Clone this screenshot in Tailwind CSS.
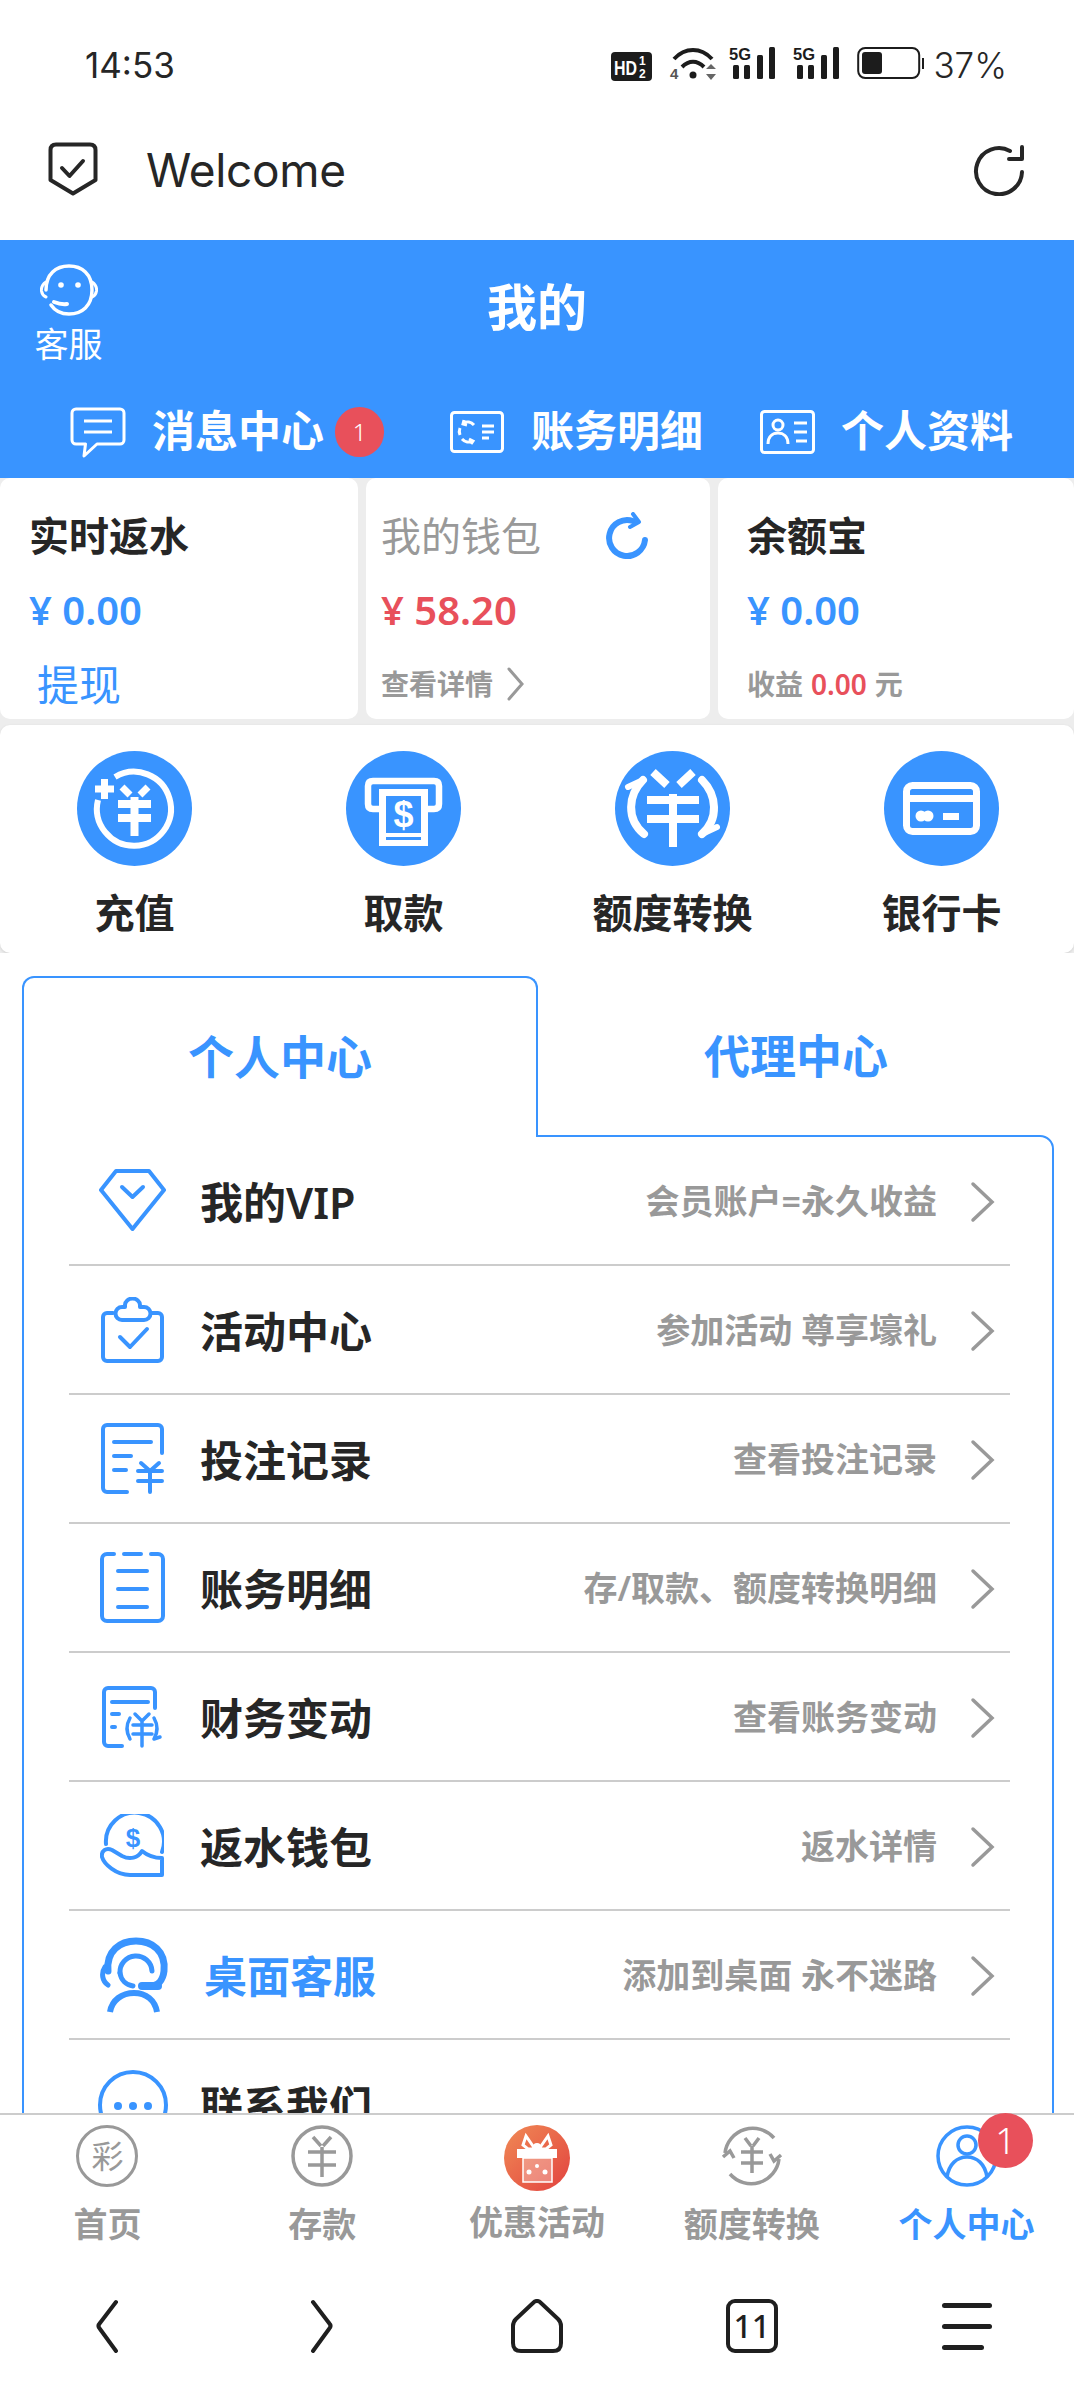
<!DOCTYPE html>
<html lang="zh-CN">
<head>
  <meta charset="UTF-8" />
  <meta name="viewport" content="width=device-width, initial-scale=1.0"/>
  <title>我的</title>
  <script src="https://cdn.jsdelivr.net/npm/@tailwindcss/browser@4"></script>
</head>
<body class="bg-white font-['Noto_Sans','Noto_Sans_CJK_SC',sans-serif]">
<div class="w-[1074px] h-[2400px] flex flex-col overflow-hidden text-[#262626]">

  <!-- Status bar -->
  <div class="h-[100px] shrink-0 pt-[46px] pl-[85px] pr-[67px] flex items-start justify-between">
    <span class="text-[35px] leading-[38px] font-['Inter']">14:53</span>
    <div class="flex items-start h-[36px]">
      <svg width="42" height="30" viewBox="0 0 42 30" class="mt-[6px]"><rect width="41" height="29" rx="4" fill="#1c1c1c"/><text x="3" y="23" font-size="20" font-weight="700" fill="#fff" font-family="Liberation Sans" textLength="23" lengthAdjust="spacingAndGlyphs">HD</text><text x="28" y="13" font-size="12" font-weight="700" fill="#fff" font-family="Liberation Sans">1</text><text x="28" y="26" font-size="12" font-weight="700" fill="#fff" font-family="Liberation Sans">2</text></svg>
      <svg width="48" height="36" viewBox="0 0 48 36" class="ml-[16px]" fill="none"><path d="M5 13C16 1 32 1 43 13" stroke="#1c1c1c" stroke-width="4"/><path d="M13 21C20 14 28 14 35 21" stroke="#1c1c1c" stroke-width="4"/><circle cx="24" cy="29" r="3.5" fill="#1c1c1c"/><text x="1" y="33" font-size="15" font-weight="700" fill="#555" font-family="Liberation Sans">4</text><path d="M38 22l5-5 5 5zM38 27l5 6 5-6z" fill="#666" transform="translate(-1 1)"/></svg>
      <svg width="46" height="34" viewBox="0 0 46 34" class="ml-[12px]" fill="#1c1c1c"><text x="0" y="14" font-size="16" font-weight="700" font-family="Liberation Sans" textLength="22" lengthAdjust="spacingAndGlyphs">5G</text><rect x="4" y="19" width="6" height="14" rx="1.5"/><rect x="15" y="19" width="6" height="14" rx="1.5"/><rect x="28" y="9" width="6" height="24" rx="1.5"/><rect x="40" y="1" width="6" height="32" rx="1.5"/></svg>
      <svg width="46" height="34" viewBox="0 0 46 34" class="ml-[18px]" fill="#1c1c1c"><text x="0" y="14" font-size="16" font-weight="700" font-family="Liberation Sans" textLength="22" lengthAdjust="spacingAndGlyphs">5G</text><rect x="4" y="19" width="6" height="14" rx="1.5"/><rect x="15" y="19" width="6" height="14" rx="1.5"/><rect x="28" y="9" width="6" height="24" rx="1.5"/><rect x="40" y="1" width="6" height="32" rx="1.5"/></svg>
      <svg width="68" height="34" viewBox="0 0 68 34" class="ml-[18px]" fill="none"><rect x="1.2" y="2" width="61" height="30" rx="7" stroke="#1c1c1c" stroke-width="2"/><rect x="5" y="6" width="20" height="22" rx="3" fill="#1c1c1c"/><rect x="65" y="12" width="2" height="11" fill="#1c1c1c"/></svg>
      <span class="ml-[8px] text-[35px] leading-[38px] font-['Inter'] font-light">37%</span>
    </div>
  </div>

  <!-- Browser bar -->
  <div class="h-[140px] shrink-0 pl-[48px] pr-[48px] flex items-center">
    <svg width="50" height="54" viewBox="0 0 50 54" fill="none" stroke="#262626" stroke-width="4" stroke-linejoin="round" class="-mt-[2px]"><path d="M8 2.500H42Q47.500 2.500 47.500 8V38L25 51.500 2.500 38V8Q2.500 2.500 8 2.500Z"/><path d="M14 26l7.500 8L35 19" stroke-linecap="round"/></svg>
    <span class="ml-[48px] text-[46px] leading-none font-['Inter'] tracking-[-0.3px]">Welcome</span>
    <svg width="54" height="52" viewBox="0 0 54 52" fill="none" stroke="#262626" stroke-width="4" stroke-linecap="round" stroke-linejoin="round" class="ml-auto"><path d="M50 28A23 23 0 1 1 38 7"/><path d="M50 3L50 15 37 15"/></svg>
  </div>

  <!-- Scrolling page, cut off by the tab bar -->
  <div class="h-[1873px] shrink-0 overflow-hidden bg-white">
    <!-- Blue header -->
    <div class="h-[238px] bg-[#3994ff] text-white">
      <div class="grid grid-cols-[137px_1fr_137px] h-[166px]">
        <div class="flex flex-col items-center pt-[24px]">
          <svg width="58" height="52" viewBox="0 0 58 52" fill="none" stroke="#fff" stroke-width="3.500" stroke-linecap="round"><path d="M6 26C6 10 16 2 29 2s23 8 23 24-10 24-23 24c-8 0-14-3-18-9"/><path d="M6 18C3 20 1 23 1.500 27c.5 3 2 5 4.500 6" stroke-width="3"/><path d="M52 18c3 2 5 5 4.500 9-.5 3-2 5-4.500 6" stroke-width="3"/><circle cx="21" cy="21" r="2.800" fill="#fff" stroke="none"/><circle cx="38" cy="21" r="2.800" fill="#fff" stroke="none"/><path d="M14 38c5 2 9 2.500 13 2" stroke-width="4"/></svg>
          <span class="mt-[6px] text-[34px] leading-[44px]">客服</span>
        </div>
        <div class="flex justify-center items-start pt-[36px]"><span class="text-[50px] leading-[62px] font-bold">我的</span></div>
      </div>
      <div class="flex items-center h-[52px] pl-[70px]">
        <div class="w-[380px] flex items-center">
          <svg width="56" height="51" viewBox="0 0 56 51" fill="none" stroke="#fff" stroke-width="3" stroke-linejoin="round"><path d="M6 2H50a4 4 0 0 1 4 4V33a4 4 0 0 1-4 4H27L14 49 15.500 37H6a4 4 0 0 1-4-4V6A4 4 0 0 1 6 2Z"/><path d="M14 14H42M14 25H42"/></svg>
          <span class="ml-[26px] -mt-[3px] text-[43px] leading-[50px] font-bold">消息中心</span>
          <span class="ml-[11px] w-[49px] h-[50px] rounded-full bg-[#e8505b] flex items-center justify-center text-[24px] font-light">1</span>
        </div>
        <div class="w-[310px] flex items-center">
          <svg width="54" height="42" viewBox="0 0 54 42" fill="none" stroke="#fff" stroke-width="3"><rect x="1.500" y="1.500" width="51" height="39" rx="3"/><path d="M13 12a9 9 0 0 1 11 2M23 30a9 9 0 0 1-11-2M10 24a9 9 0 0 1 0-7M14 9l-1 4 4 1M21 33l2-3-4-2"/><path d="M32 15H44M32 21H44M32 27H39"/></svg>
          <span class="ml-[27px] -mt-[3px] text-[43px] leading-[50px] font-bold">账务明细</span>
        </div>
        <div class="flex items-center">
          <svg width="55" height="44" viewBox="0 0 55 44" fill="none" stroke="#fff" stroke-width="3"><rect x="1.500" y="1.500" width="52" height="41" rx="3"/><circle cx="18" cy="15" r="5"/><path d="M8 34c0-8 5-11 10-11s10 3 10 11"/><path d="M34 13H47M34 22H47M36 31H47"/></svg>
          <span class="ml-[26px] -mt-[3px] text-[43px] leading-[50px] font-bold">个人资料</span>
        </div>
      </div>
    </div>

    <!-- Wallet cards and quick actions -->
    <div class="bg-[#ededed]">
      <div class="flex gap-[8px] h-[241px]">
        <div class="w-[358px] bg-white rounded-[10px] pl-[29px] pt-[38px] flex flex-col gap-[34px]">
          <div class="h-[40px] flex items-center text-[40px] font-semibold">实时返水</div>
          <div class="h-[40px] flex items-center text-[40px] font-semibold text-[#3994ff]">¥ 0.00</div>
          <div class="h-[40px] flex items-center text-[42px] text-[#3994ff] pl-[8px]">提现</div>
        </div>
        <div class="w-[344px] bg-white rounded-[10px] pl-[15px] pt-[38px] flex flex-col gap-[34px]">
          <div class="h-[40px] flex items-center text-[40px] text-[#999]">我的钱包
            <svg width="44" height="48" viewBox="0 0 44 48" fill="none" stroke="#3994ff" stroke-width="6" stroke-linecap="round" stroke-linejoin="round" class="ml-[65px]"><path d="M39 28A18 18 0 1 1 27 9"/><path d="M27 2L33 10 24 15" stroke-width="4"/></svg>
          </div>
          <div class="h-[40px] flex items-center text-[40px] font-semibold text-[#e8505b]">¥ 58.20</div>
          <div class="h-[40px] flex items-center text-[28px] font-semibold text-[#999]">查看详情
            <svg width="18" height="34" viewBox="0 0 18 34" fill="none" stroke="#999" stroke-width="3" stroke-linecap="round" class="ml-[14px]"><path d="M2 2L15 17 2 32"/></svg>
          </div>
        </div>
        <div class="flex-1 bg-white rounded-[10px] pl-[29px] pt-[38px] flex flex-col gap-[34px]">
          <div class="h-[40px] flex items-center text-[40px] font-semibold">余额宝</div>
          <div class="h-[40px] flex items-center text-[40px] font-semibold text-[#3994ff]">¥ 0.00</div>
          <div class="h-[40px] flex items-center text-[28px] font-semibold text-[#999]">收益<span class="ml-[8px] text-[#e8505b]">0.00</span><span class="ml-[8px]">元</span></div>
        </div>
      </div>
      <div class="mt-[6px] h-[228px] bg-white rounded-[10px] pt-[26px] pb-[16px] grid grid-cols-[269px_269px_269px_269px] shadow-[0_1px_3px_rgba(0,0,0,0.12)]">
        <div class="flex flex-col items-center">
          <svg width="115" height="115" viewBox="0 0 115 115"><circle cx="57.500" cy="57.500" r="57.500" fill="#3994ff"/><g fill="none" stroke="#fff"><path d="M38 26A37 37 0 1 1 21 49" stroke-width="6"/><path d="M18 38H37M27.500 28V48" stroke-width="7"/><path d="M45 36l8 8M71 36l-8 8" stroke-width="7"/><path d="M41 53H74M41 67H74M57.500 46V85" stroke-width="8"/></g></svg>
          <span class="mt-[23px] text-[40px] leading-[48px] font-semibold">充值</span>
        </div>
        <div class="flex flex-col items-center">
          <svg width="115" height="115" viewBox="0 0 115 115"><circle cx="57.500" cy="57.500" r="57.500" fill="#3994ff"/><path d="M33 58H27Q22 58 22 53V35Q22 30 27 30H88Q93 30 93 35V53Q93 58 88 58H82" fill="none" stroke="#fff" stroke-width="6.500"/><rect x="33" y="38" width="49" height="57" fill="#fff"/><rect x="40" y="45" width="35" height="37" fill="#3994ff"/><rect x="40" y="86" width="35" height="3" fill="#3994ff"/><text x="57.500" y="76" text-anchor="middle" font-size="36" font-weight="700" fill="#fff" font-family="Liberation Sans">$</text></svg>
          <span class="mt-[23px] text-[40px] leading-[48px] font-semibold">取款</span>
        </div>
        <div class="flex flex-col items-center">
          <svg width="115" height="115" viewBox="0 0 115 115"><circle cx="57.500" cy="57.500" r="57.500" fill="#3994ff"/><g fill="none" stroke="#fff" stroke-width="8"><path d="M38 21l14 13M78 21L64 34"/><path d="M32 49H84M32 68H84M58 43V96"/><path d="M28 29C13 44 11 68 29 83" stroke-linecap="round"/><path d="M87 29C102 44 104 68 87 83" stroke-linecap="round"/><path d="M13 36l15-7M102 76l-15 7" stroke-linecap="round" stroke-width="6"/></g></svg>
          <span class="mt-[23px] text-[40px] leading-[48px] font-semibold">额度转换</span>
        </div>
        <div class="flex flex-col items-center">
          <svg width="115" height="115" viewBox="0 0 115 115"><circle cx="57.500" cy="57.500" r="57.500" fill="#3994ff"/><rect x="22.500" y="34.500" width="70" height="46" rx="6" fill="none" stroke="#fff" stroke-width="7"/><rect x="22" y="44" width="71" height="7" fill="#fff"/><circle cx="37" cy="65" r="5.500" fill="#fff"/><circle cx="44" cy="65" r="5.500" fill="#fff"/><rect x="59" y="62" width="16" height="7" fill="#fff"/></svg>
          <span class="mt-[23px] text-[40px] leading-[48px] font-semibold">银行卡</span>
        </div>
      </div>
    </div>

    <!-- Tabs -->
    <div class="bg-white pl-[22px] pr-[20px] pt-[23px]">
      <div class="flex text-[46px] font-semibold text-[#3994ff]">
        <div class="relative z-10 -mb-[2px] w-[516px] h-[161px] bg-white border-2 border-b-0 border-[#3994ff] rounded-t-[12px] flex items-center justify-center pb-[2px]">个人中心</div>
        <div class="flex-1 h-[159px] flex items-center justify-center">代理中心</div>
      </div>
      <div class="border-2 border-[#3994ff] rounded-tr-[14px] pl-[45px] pr-[42px] h-[1200px]">
        <div class="h-[129px] border-b-2 border-[#ccc] flex items-center">
          <div class="w-[131px] shrink-0 pl-[30px]">
            <svg width="67" height="63" viewBox="0 0 67 63" fill="none" stroke="#3994ff" stroke-width="4" stroke-linejoin="round" stroke-linecap="round"><path d="M17 2H50L65 21 33.500 60 2 21Z"/><path d="M23 18L33.500 28 44 18"/></svg>
          </div>
          <span class="pt-[5px] text-[43px] font-semibold">我的VIP</span>
          <span class="ml-auto pt-[2px] text-[34px] font-semibold text-[#999]">会员账户=永久收益</span>
          <svg width="26" height="42" viewBox="0 0 26 42" fill="none" stroke="#999" stroke-width="3.500" stroke-linecap="round" class="ml-[32px] mr-[15px] mt-[2px]"><path d="M4 3L23 21 4 39"/></svg>
        </div>
        <div class="h-[129px] border-b-2 border-[#ccc] flex items-center">
          <div class="w-[131px] shrink-0 pl-[32px]">
            <svg width="63" height="66" viewBox="0 0 63 66" fill="none" stroke="#3994ff" stroke-width="4" stroke-linejoin="round" stroke-linecap="round"><path d="M12 16H6a4 4 0 0 0-4 4V60a4 4 0 0 0 4 4H57a4 4 0 0 0 4-4V20a4 4 0 0 0-4-4H51"/><path d="M24 10V8a7 6 0 0 1 15 0V10H43a6 6 0 0 1 0 13H21a6 6 0 0 1 0-13Z"/><path d="M19 40L29 50 46 32"/></svg>
          </div>
          <span class="pt-[5px] text-[43px] font-semibold">活动中心</span>
          <span class="ml-auto pt-[2px] text-[34px] font-semibold text-[#999]">参加活动 尊享壕礼</span>
          <svg width="26" height="42" viewBox="0 0 26 42" fill="none" stroke="#999" stroke-width="3.500" stroke-linecap="round" class="ml-[32px] mr-[15px] mt-[2px]"><path d="M4 3L23 21 4 39"/></svg>
        </div>
        <div class="h-[129px] border-b-2 border-[#ccc] flex items-center">
          <div class="w-[131px] shrink-0 pl-[32px]">
            <svg width="63" height="71" viewBox="0 0 63 71" fill="none" stroke="#3994ff" stroke-width="4" stroke-linejoin="round" stroke-linecap="round"><path d="M61 30V6a4 4 0 0 0-4-4H6a4 4 0 0 0-4 4V65a4 4 0 0 0 4 4H26"/><path d="M13 19H50M13 33H30M13 47H25"/><path d="M40 40l9 8 9-8M37 48H61M37 58H61M49 48V69"/></svg>
          </div>
          <span class="pt-[5px] text-[43px] font-semibold">投注记录</span>
          <span class="ml-auto pt-[2px] text-[34px] font-semibold text-[#999]">查看投注记录</span>
          <svg width="26" height="42" viewBox="0 0 26 42" fill="none" stroke="#999" stroke-width="3.500" stroke-linecap="round" class="ml-[32px] mr-[15px] mt-[2px]"><path d="M4 3L23 21 4 39"/></svg>
        </div>
        <div class="h-[129px] border-b-2 border-[#ccc] flex items-center">
          <div class="w-[131px] shrink-0 pl-[31px]">
            <svg width="65" height="71" viewBox="0 0 65 71" fill="none" stroke="#3994ff" stroke-width="4" stroke-linejoin="round" stroke-linecap="round"><path d="M14 2H7a5 5 0 0 0-5 5V64a5 5 0 0 0 5 5H58a5 5 0 0 0 5-5V7a5 5 0 0 0-5-5H51M24 2H41"/><path d="M18 19H47M18 37H47M18 55H47"/></svg>
          </div>
          <span class="pt-[5px] text-[43px] font-semibold">账务明细</span>
          <span class="ml-auto pt-[2px] text-[34px] font-semibold text-[#999]">存/取款、额度转换明细</span>
          <svg width="26" height="42" viewBox="0 0 26 42" fill="none" stroke="#999" stroke-width="3.500" stroke-linecap="round" class="ml-[32px] mr-[15px] mt-[2px]"><path d="M4 3L23 21 4 39"/></svg>
        </div>
        <div class="h-[129px] border-b-2 border-[#ccc] flex items-center">
          <div class="w-[131px] shrink-0 pl-[33px]">
            <svg width="62" height="62" viewBox="0 0 62 62" fill="none" stroke="#3994ff" stroke-width="4" stroke-linejoin="round" stroke-linecap="round"><path d="M53 22V6a4 4 0 0 0-4-4H6a4 4 0 0 0-4 4V56a4 4 0 0 0 4 4H20"/><path d="M10 16H46M10 28H17M10 41H13"/><path d="M33 28l7 7 7-7M31 39H50M31 48H50M40 35V60" stroke-width="3.500"/><path d="M28 32c-4 7-4 14 0 21M52 32c4 7 4 14 0 21M52 53l6-2" stroke-width="3.500"/></svg>
          </div>
          <span class="pt-[5px] text-[43px] font-semibold">财务变动</span>
          <span class="ml-auto pt-[2px] text-[34px] font-semibold text-[#999]">查看账务变动</span>
          <svg width="26" height="42" viewBox="0 0 26 42" fill="none" stroke="#999" stroke-width="3.500" stroke-linecap="round" class="ml-[32px] mr-[15px] mt-[2px]"><path d="M4 3L23 21 4 39"/></svg>
        </div>
        <div class="h-[129px] border-b-2 border-[#ccc] flex items-center">
          <div class="w-[131px] shrink-0 pl-[31px]">
            <svg width="64" height="64" viewBox="0 0 64 64" fill="none" stroke="#3994ff" stroke-width="4" stroke-linejoin="round" stroke-linecap="round"><path d="M6 30A29 29 0 1 1 62 38"/><path d="M62 44C54 44 48 42 42 37 38 44 30 46 22 42L12 36C6 33 1 37 2 43 4 50 16 61 30 61H62Z"/><text x="33" y="33" text-anchor="middle" font-size="26" font-weight="700" fill="#3994ff" stroke="none" font-family="Liberation Sans">$</text></svg>
          </div>
          <span class="pt-[5px] text-[43px] font-semibold">返水钱包</span>
          <span class="ml-auto pt-[2px] text-[34px] font-semibold text-[#999]">返水详情</span>
          <svg width="26" height="42" viewBox="0 0 26 42" fill="none" stroke="#999" stroke-width="3.500" stroke-linecap="round" class="ml-[32px] mr-[15px] mt-[2px]"><path d="M4 3L23 21 4 39"/></svg>
        </div>
        <div class="h-[129px] border-b-2 border-[#ccc] flex items-center">
          <div class="w-[135px] shrink-0 pl-[31px]">
            <svg width="72" height="76" viewBox="0 0 72 76" fill="none" stroke="#3994ff" stroke-linecap="round"><path d="M8 34C6 14 20 4 36 4s30 10 28 30c-1 9-6 15-14 15" stroke-width="7"/><path d="M20 36a16 16 0 1 1 32-2" stroke-width="5"/><path d="M20 36c1 7 6 12 13 13" stroke-width="5"/><path d="M5 30c-4 6-3 14 3 18" stroke-width="5"/><path d="M42 49H58" stroke-width="8"/><path d="M10 75c2-12 12-19 24-19s21 7 23 19" stroke-width="6" stroke-linecap="butt"/></svg>
          </div>
          <span class="pt-[5px] text-[43px] font-semibold text-[#3994ff]">桌面客服</span>
          <span class="ml-auto pt-[2px] text-[34px] font-semibold text-[#999]">添加到桌面 永不迷路</span>
          <svg width="26" height="42" viewBox="0 0 26 42" fill="none" stroke="#999" stroke-width="3.500" stroke-linecap="round" class="ml-[32px] mr-[15px] mt-[2px]"><path d="M4 3L23 21 4 39"/></svg>
        </div>
        <div class="h-[129px] flex items-center">
          <div class="w-[131px] shrink-0 pl-[28px]">
            <svg width="72" height="72" viewBox="0 0 72 72" fill="none" stroke="#3994ff" stroke-width="4"><circle cx="36" cy="36" r="33"/><circle cx="21" cy="37" r="4" fill="#3994ff" stroke="none"/><circle cx="36" cy="37" r="4" fill="#3994ff" stroke="none"/><circle cx="51" cy="37" r="4" fill="#3994ff" stroke="none"/></svg>
          </div>
          <span class="pt-[5px] text-[43px] font-semibold">联系我们</span>
        </div>
      </div>
    </div>
  </div>

  <!-- Tab bar -->
  <div class="relative h-[153px] shrink-0 bg-white border-t-2 border-[#ccc] grid grid-cols-5 text-[34px] font-semibold text-[#999]">
    <div class="flex flex-col items-center pt-[10px]">
      <div class="w-[62px] h-[62px] rounded-full border-[3.500px] border-[#999] flex items-center justify-center text-[32px] font-normal leading-none">彩</div>
      <span class="mt-[15px] leading-[44px]">首页</span>
    </div>
    <div class="flex flex-col items-center pt-[10px]">
      <svg width="62" height="62" viewBox="0 0 62 62" fill="none" stroke="#999" stroke-width="3.500"><circle cx="31" cy="31" r="29"/><path d="M22 12l8 9M40 12l-8 9M17 27H45M17 40H45M31 22V52"/></svg>
      <span class="mt-[15px] leading-[44px]">存款</span>
    </div>
    <div class="flex flex-col items-center pt-[10px]">
      <svg width="66" height="66" viewBox="0 0 66 66" class="-mb-[4px]"><defs><linearGradient id="gift" x1="0" y1="0" x2="1" y2="1"><stop offset="0" stop-color="#f08a55"/><stop offset="1" stop-color="#e2423f"/></linearGradient></defs><circle cx="33" cy="33" r="33" fill="url(#gift)"/><path d="M19 33H48V57H19Z" fill="#fff" fill-opacity=".3" stroke="#fff" stroke-width="1.500"/><path d="M13 24H53V33H13Z" fill="#fff"/><path d="M31 24L22 11 19 20 24 24ZM35 24L44 11 47 20 42 24Z" fill="none" stroke="#fff" stroke-width="3"/><circle cx="33" cy="22" r="4" fill="#fff"/><circle cx="25" cy="47" r="2.500" fill="#fff"/><circle cx="33" cy="41" r="2" fill="#fff"/><circle cx="41" cy="47" r="2.500" fill="#fff"/></svg>
      <span class="mt-[13px] leading-[44px]">优惠活动</span>
    </div>
    <div class="flex flex-col items-center pt-[10px]">
      <svg width="62" height="62" viewBox="0 0 62 62" fill="none" stroke="#999" stroke-width="3.500"><path d="M4 28A28 28 0 0 1 53 13M58 34A28 28 0 0 1 9 49"/><path d="M2 32l7-6 4 7M60 30l-7 6-4-7"/><path d="M24 13l6 8M38 13l-6 8M20 27H42M20 38H42M31 21V48"/></svg>
      <span class="mt-[15px] leading-[44px]">额度转换</span>
    </div>
    <div class="flex flex-col items-center pt-[10px] text-[#3994ff]">
      <svg width="62" height="62" viewBox="0 0 62 62" fill="none" stroke="#3994ff" stroke-width="3.500"><circle cx="31" cy="31" r="29"/><circle cx="31" cy="20" r="9"/><path d="M11 52c2-13 10-20 20-20s18 7 20 20"/></svg>
      <span class="mt-[15px] leading-[44px]">个人中心</span>
    </div>
    <!-- Unread badge sits across the bar's top edge -->
    <span class="absolute left-[978px] -top-[2px] w-[55px] h-[55px] rounded-full bg-[#e8505b] text-white text-[36px] font-light flex items-center justify-center">1</span>
  </div>

  <!-- Browser navigation -->
  <div class="flex-1 grid grid-cols-5 items-center pb-[14px] bg-white">
    <svg width="26" height="54" viewBox="0 0 26 54" fill="none" stroke="#1f1f1f" stroke-width="4" stroke-linecap="round" stroke-linejoin="round" class="justify-self-center"><path d="M22 3L6 24Q3 27 6 30L22 52"/></svg>
    <svg width="26" height="54" viewBox="0 0 26 54" fill="none" stroke="#1f1f1f" stroke-width="4" stroke-linecap="round" stroke-linejoin="round" class="justify-self-center"><path d="M4 3L20 24Q23 27 20 30L4 52"/></svg>
    <svg width="52" height="54" viewBox="0 0 52 54" fill="none" stroke="#1f1f1f" stroke-width="4" stroke-linejoin="round" class="justify-self-center"><path d="M22 4Q26 0 30 4L47 20Q50 23 50 27V44Q50 52 42 52H10Q2 52 2 44V27Q2 23 5 20Z"/></svg>
    <div class="justify-self-center w-[52px] h-[54px] rounded-[9px] border-[4px] border-[#1f1f1f] flex items-center justify-center text-[32px] leading-none font-medium text-[#1f1f1f]">11</div>
    <div class="justify-self-center w-[50px] flex flex-col gap-[16px]">
      <div class="h-[5px] rounded-full bg-[#1f1f1f]"></div>
      <div class="h-[5px] rounded-full bg-[#1f1f1f]"></div>
      <div class="h-[5px] w-[42px] rounded-full bg-[#1f1f1f]"></div>
    </div>
  </div>

</div>
</body>
</html>
